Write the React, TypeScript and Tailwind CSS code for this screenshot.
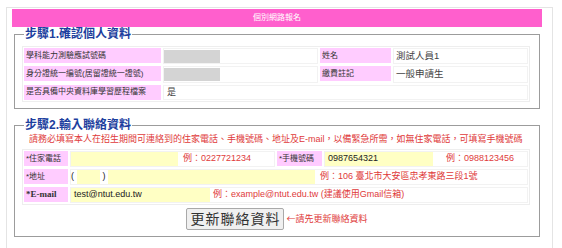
import React from "react";

const cjk = "font-['Liberation_Sans','Noto_Sans_CJK_TC',sans-serif]";

function Label({ w, children, serif }: { w: string; children: React.ReactNode; serif?: boolean }) {
  return (
    <div
      className={`${w} h-[15px] shrink-0 bg-[#ffccff] pl-[2px] flex items-center text-[8px] text-[#333] ${
        serif ? "font-['Liberation_Serif',serif] font-bold text-[9px]" : ""
      }`}
    >
      {children}
    </div>
  );
}

function Hint({ children }: { children: React.ReactNode }) {
  return <span className="text-[9px] text-[#e03a3a] whitespace-nowrap">{children}</span>;
}

function Field({ w, value }: { w: string; value?: string }) {
  return (
    <div className={`${w} h-[14px] shrink-0 bg-[#ffffc4] flex items-center pl-[3px] text-[9px] text-[#222]`}>
      {value}
    </div>
  );
}

export default function App() {
  return (
    <div className={`w-[562px] h-[248px] bg-white overflow-hidden ${cjk}`}>
      <div className="ml-[6px] mt-[7px] w-[547px] h-[245px] border border-[#e4e4e4] pl-[5px] pt-[1px]">
        {/* header */}
        <div className="w-[530px] h-[18px] bg-[#ff5fcd] flex items-center justify-center text-white text-[8px]">
          個別網路報名
        </div>

        {/* step 1 */}
        <fieldset className="ml-[2px] w-[526px] border border-[#9c9c9c] px-[7px] pb-[6px]">
          <legend className="ml-[2px] px-[1px] text-[12px] font-bold text-[#1d3f9e] leading-[15px]">
            步驟1.確認個人資料
          </legend>
          <div className="mt-[4px] w-[508px] border border-[#eee] p-[1px] flex flex-col gap-[2px]">
            <div className="flex gap-[2px]">
              <Label w="w-[137px]">學科能力測驗應試號碼</Label>
              <div className="w-[155px] border border-[#f2f2f2] flex items-center">
                <div className="w-[56px] h-[13px] bg-[#d4d4d4]" />
              </div>
              <Label w="w-[71px]">姓名</Label>
              <div className="flex-1 border border-[#f2f2f2] flex items-center pl-[2px] text-[9.5px] text-[#444]">
                測試人員1
              </div>
            </div>
            <div className="flex gap-[2px]">
              <Label w="w-[137px]">身分證統一編號(居留證統一證號)</Label>
              <div className="w-[155px] border border-[#f2f2f2] flex items-center">
                <div className="w-[56px] h-[13px] bg-[#d4d4d4]" />
              </div>
              <Label w="w-[71px]">繳費註記</Label>
              <div className="flex-1 border border-[#f2f2f2] flex items-center pl-[2px] text-[9.5px] text-[#444]">
                一般申請生
              </div>
            </div>
            <div className="flex gap-[2px]">
              <Label w="w-[137px]">是否具備中央資料庫學習歷程檔案</Label>
              <div className="flex-1 border border-[#f2f2f2] flex items-center pl-[3px] text-[9px] text-[#444]">
                是
              </div>
            </div>
          </div>
        </fieldset>

        {/* step 2 */}
        <fieldset className="ml-[2px] mt-[9px] w-[526px] border border-[#9c9c9c] px-[7px] pb-[6px]">
          <legend className="ml-[2px] px-[1px] text-[12px] font-bold text-[#1d3f9e] leading-[15px]">
            步驟2.輸入聯絡資料
          </legend>
          <div className="pl-[7px] h-[14px] flex items-center text-[9px] text-[#e03a3a] whitespace-nowrap">
            請務必填寫本人在招生期間可連絡到的住家電話、手機號碼、地址及E-mail，以備緊急所需，如無住家電話，可填寫手機號碼
          </div>
          <div className="mt-[2px] w-[508px] border border-[#eee] p-[1px] flex flex-col gap-[2px]">
            <div className="flex gap-[2px]">
              <Label w="w-[44px]">*住家電話</Label>
              <div className="w-[205px] border border-[#f2f2f2] flex items-center gap-[5px]">
                <Field w="w-[107px]" />
                <Hint>例：0227721234</Hint>
              </div>
              <Label w="w-[45px]">*手機號碼</Label>
              <div className="flex-1 border border-[#f2f2f2] flex items-center gap-[13px]">
                <Field w="w-[108px]" value="0987654321" />
                <Hint>例：0988123456</Hint>
              </div>
            </div>
            <div className="flex gap-[2px]">
              <Label w="w-[44px]">*地址</Label>
              <div className="flex-1 border border-[#f2f2f2] flex items-center text-[9px] text-[#222]">
                <span className="w-[6px]">(</span>
                <Field w="w-[23px]" />
                <span className="w-[8px] text-center">)</span>
                <Field w="w-[207px]" />
                <span className="ml-[5px]">
                  <Hint>例：106 臺北市大安區忠孝東路三段1號</Hint>
                </span>
              </div>
            </div>
            <div className="flex gap-[2px]">
              <Label w="w-[44px]" serif>
                *E-mail
              </Label>
              <div className="flex-1 border border-[#f2f2f2] flex items-center gap-[3px]">
                <Field w="w-[139px]" value="test@ntut.edu.tw" />
                <Hint>例：example@ntut.edu.tw (建議使用Gmail信箱)</Hint>
              </div>
            </div>
          </div>
          <div className="mt-[3px] flex items-center justify-center gap-[2px]">
            <button className="w-[98px] h-[22px] border border-[#a9a9a9] rounded-[2px] bg-[#f0f0f0] text-[14px] tracking-[1px] text-[#333] leading-none">
              更新聯絡資料
            </button>
            <span className="text-[9px] text-[#e03a3a] whitespace-nowrap">
              <span className="font-['Noto_Sans_CJK_TC',sans-serif]">←</span>請先更新聯絡資料
            </span>
          </div>
        </fieldset>
      </div>
    </div>
  );
}
